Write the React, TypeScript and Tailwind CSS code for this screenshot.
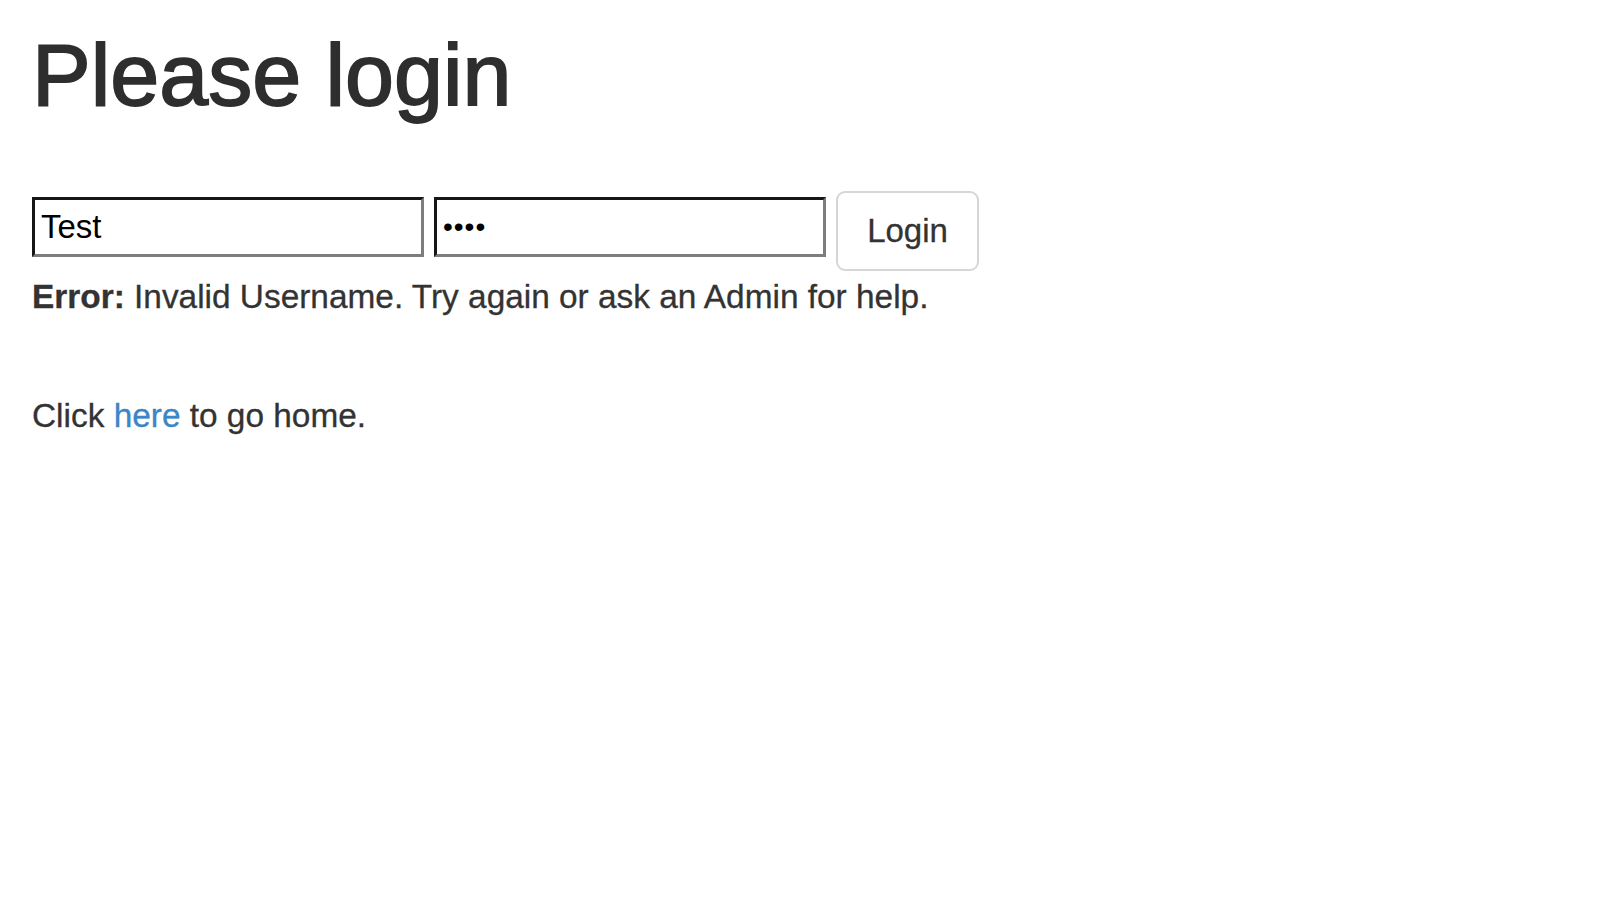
import { useState } from "react";

const font = { fontFamily: '"Liberation Sans", Arial, Helvetica, sans-serif' };

function LoginForm() {
  const [username, setUsername] = useState("Test");
  const [password, setPassword] = useState("abcd");

  return (
    <form className="flex items-start" onSubmit={(e) => e.preventDefault()}>
      <input
        type="text"
        value={username}
        onChange={(e) => setUsername(e.target.value)}
        className="mt-[6px] h-[60px] w-[392px] border-[3px] border-t-[#161616] border-l-[#161616] border-r-[#7d7d7d] border-b-[#7d7d7d] bg-white px-[6px] text-[33px] text-black outline-none"
        style={font}
      />
      <input
        type="password"
        value={password}
        onChange={(e) => setPassword(e.target.value)}
        className="ml-[10px] mt-[6px] h-[60px] w-[392px] border-[3px] border-t-[#161616] border-l-[#161616] border-r-[#7d7d7d] border-b-[#7d7d7d] bg-white px-[6px] text-[28px] tracking-[1px] text-black outline-none"
        style={font}
      />
      <button
        type="submit"
        className="ml-[10px] h-[80px] w-[143px] rounded-[9px] border-2 border-[#d6d6d6] bg-white text-[33px] text-[#333] [-webkit-text-stroke:0.3px_#333]"
        style={font}
      >
        Login
      </button>
    </form>
  );
}

export default function App() {
  return (
    <div className="min-h-[918px] bg-white px-[32px] text-[#333]" style={font}>
      <h1 className="pt-[27px] text-[88px] leading-[96px] font-normal text-[#2e2e2e] [-webkit-text-stroke:1.8px_#2e2e2e]">
        Please login
      </h1>
      <div className="mt-[68px]">
        <LoginForm />
        <p className="mt-[2px] text-[33.4px] leading-[47px] [-webkit-text-stroke:0.3px_#333]">
          <strong className="font-bold">Error:</strong> Invalid Username. Try again or ask an Admin for help.
        </p>
      </div>
      <p className="mt-[72px] text-[33.4px] leading-[47px] [-webkit-text-stroke:0.3px_#333]">
        Click{" "}
        <a href="#" className="text-[#3b86c6] [-webkit-text-stroke:0.3px_#3b86c6]">
          here
        </a>{" "}
        to go home.
      </p>
    </div>
  );
}
